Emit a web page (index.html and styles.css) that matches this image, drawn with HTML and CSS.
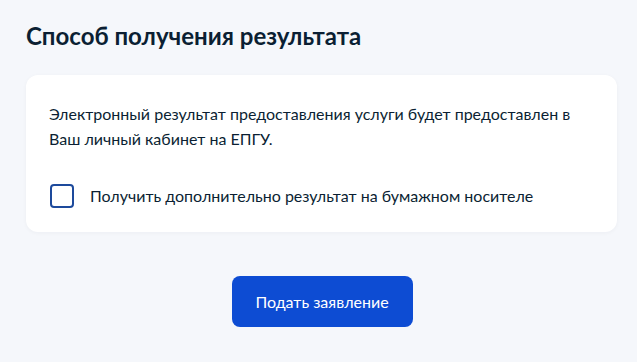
FILE: index.html
```html
<!DOCTYPE html>
<html lang="ru">
<head>
    <meta charset="UTF-8">
    <meta name="viewport" content="width=device-width, initial-scale=1.0">
    <title>Способ получения результата</title>
    <link rel="stylesheet" href="styles.css">
</head>
<body>
    <div class="page">
        <h2 class="title">Способ получения результата</h2>
        <div class="card">
            <p class="card-text">Электронный результат предоставления услуги будет предоставлен в Ваш личный кабинет на ЕПГУ.</p>
            <label class="checkbox">
                <input type="checkbox" class="checkbox-input">
                <span class="checkbox-box"></span>
                <span class="checkbox-label">Получить дополнительно результат на бумажном носителе</span>
            </label>
        </div>
        <div class="actions">
            <button class="button">Подать заявление</button>
        </div>
    </div>
</body>
</html>
```

FILE: styles.css
```css
body {
    margin: 0;
    background-color: #f5f7fb;
    font-family: Lato, "Noto Sans", sans-serif;
    color: #0b1f33;
}
.page {
    padding: 20px 20px 0 26px;
}
.title {
    margin: 0 0 23px 0;
    font-size: 24px;
    line-height: 32px;
    font-weight: 700;
}
.card {
    background-color: #fff;
    border-radius: 12px;
    padding: 26px 23px 24px 23px;
    box-shadow: 0 1px 4px rgba(11, 31, 51, 0.04);
}
.card-text {
    margin: 0 0 33px 0;
    font-size: 16px;
    line-height: 25px;
    width: 540px;
}
.checkbox {
    display: flex;
    align-items: center;
    gap: 16px;
    cursor: pointer;
}
.checkbox-input {
    display: none;
}
.checkbox-box {
    width: 20px;
    height: 20px;
    border: 2px solid #1d4a9c;
    border-radius: 4px;
    margin-left: 1px;
}
.checkbox-label {
    font-size: 16px;
    line-height: 24px;
}
.actions {
    display: flex;
    justify-content: center;
    padding-top: 44px;
}
.button {
    width: 181px;
    height: 51px;
    background-color: #0d4cd3;
    color: #fff;
    border: none;
    border-radius: 8px;
    font-family: Lato, "Noto Sans", sans-serif;
    font-size: 16px;
    cursor: pointer;
    margin-left: 1px;
}
```
